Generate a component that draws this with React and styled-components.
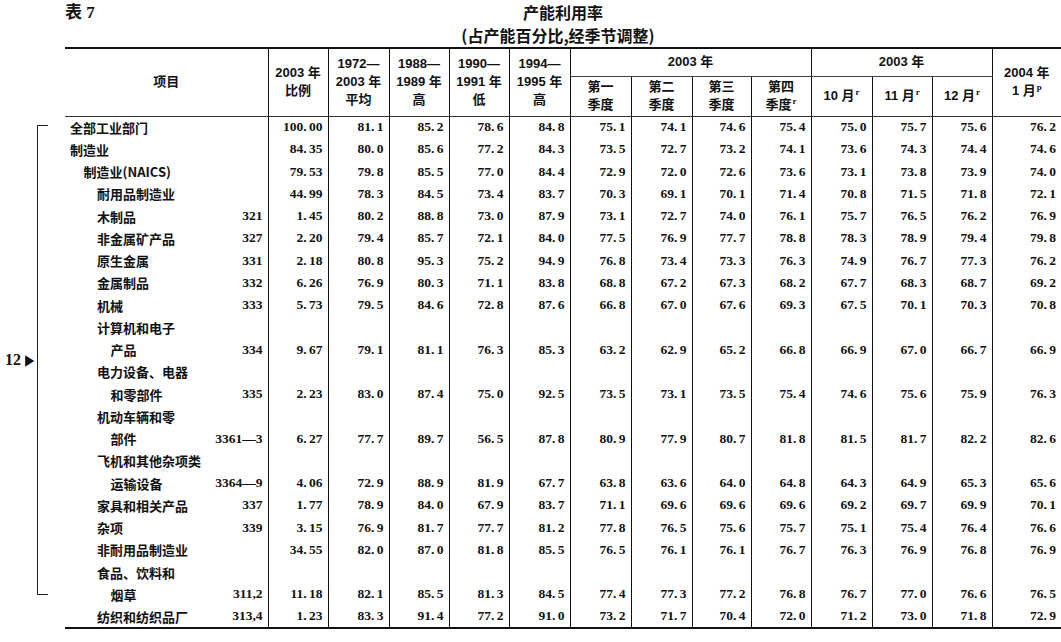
import React from "react"
import styled, { createGlobalStyle } from "styled-components"

const GlobalStyle = createGlobalStyle`
  html, body {
    margin: 0;
    padding: 0;
    background: #fff;
  }
  body {
    font-family: "Liberation Serif", "Noto Sans CJK SC", serif;
    color: #111;
  }
`

const widths = [150, 53, 60, 61, 60, 60, 61, 61, 61, 59, 60, 61, 60, 60, 69]

const rows = [
  ["全部工业部门", 0, "", "100.00", "81.1", "85.2", "78.6", "84.8", "75.1", "74.1", "74.6", "75.4", "75.0", "75.7", "75.6", "76.2"],
  ["制造业", 0, "", "84.35", "80.0", "85.6", "77.2", "84.3", "73.5", "72.7", "73.2", "74.1", "73.6", "74.3", "74.4", "74.6"],
  ["制造业(NAICS)", 1, "", "79.53", "79.8", "85.5", "77.0", "84.4", "72.9", "72.0", "72.6", "73.6", "73.1", "73.8", "73.9", "74.0"],
  ["耐用品制造业", 2, "", "44.99", "78.3", "84.5", "73.4", "83.7", "70.3", "69.1", "70.1", "71.4", "70.8", "71.5", "71.8", "72.1"],
  ["木制品", 2, "321", "1.45", "80.2", "88.8", "73.0", "87.9", "73.1", "72.7", "74.0", "76.1", "75.7", "76.5", "76.2", "76.9"],
  ["非金属矿产品", 2, "327", "2.20", "79.4", "85.7", "72.1", "84.0", "77.5", "76.9", "77.7", "78.8", "78.3", "78.9", "79.4", "79.8"],
  ["原生金属", 2, "331", "2.18", "80.8", "95.3", "75.2", "94.9", "76.8", "73.4", "73.3", "76.3", "74.9", "76.7", "77.3", "76.2"],
  ["金属制品", 2, "332", "6.26", "76.9", "80.3", "71.1", "83.8", "68.8", "67.2", "67.3", "68.2", "67.7", "68.3", "68.7", "69.2"],
  ["机械", 2, "333", "5.73", "79.5", "84.6", "72.8", "87.6", "66.8", "67.0", "67.6", "69.3", "67.5", "70.1", "70.3", "70.8"],
  ["计算机和电子", 2],
  ["产品", 3, "334", "9.67", "79.1", "81.1", "76.3", "85.3", "63.2", "62.9", "65.2", "66.8", "66.9", "67.0", "66.7", "66.9"],
  ["电力设备、电器", 2],
  ["和零部件", 3, "335", "2.23", "83.0", "87.4", "75.0", "92.5", "73.5", "73.1", "73.5", "75.4", "74.6", "75.6", "75.9", "76.3"],
  ["机动车辆和零", 2],
  ["部件", 3, "3361—3", "6.27", "77.7", "89.7", "56.5", "87.8", "80.9", "77.9", "80.7", "81.8", "81.5", "81.7", "82.2", "82.6"],
  ["飞机和其他杂项类", 2],
  ["运输设备", 3, "3364—9", "4.06", "72.9", "88.9", "81.9", "67.7", "63.8", "63.6", "64.0", "64.8", "64.3", "64.9", "65.3", "65.6"],
  ["家具和相关产品", 2, "337", "1.77", "78.9", "84.0", "67.9", "83.7", "71.1", "69.6", "69.6", "69.6", "69.2", "69.7", "69.9", "70.1"],
  ["杂项", 2, "339", "3.15", "76.9", "81.7", "77.7", "81.2", "77.8", "76.5", "75.6", "75.7", "75.1", "75.4", "76.4", "76.6"],
  ["非耐用品制造业", 2, "", "34.55", "82.0", "87.0", "81.8", "85.5", "76.5", "76.1", "76.1", "76.7", "76.3", "76.9", "76.8", "76.9"],
  ["食品、饮料和", 2],
  ["烟草", 3, "311,2", "11.18", "82.1", "85.5", "81.3", "84.5", "77.4", "77.3", "77.2", "76.8", "76.7", "77.0", "76.6", "76.5"],
  ["纺织和纺织品厂", 2, "313,4", "1.23", "83.3", "91.4", "77.2", "91.0", "73.2", "71.7", "70.4", "72.0", "71.2", "73.0", "71.8", "72.9"],
]

const Num = ({ value }) => {
  const [a, b] = value.split(".")
  return (
    <>
      {a}
      <Dot>.</Dot>
      {b}
    </>
  )
}

const App = () => (
  <Page>
    <GlobalStyle />
    <Margin>
      <Bracket />
      <Marker>
        12<Arrow>▶</Arrow>
      </Marker>
    </Margin>
    <Sheet>
      <TitleBar>
        <TableNo>表 7</TableNo>
        <TitleStack>
          <Title>产能利用率</Title>
          <Subtitle>(占产能百分比,经季节调整)</Subtitle>
        </TitleStack>
        <span />
      </TitleBar>
      <Table>
        <colgroup>
          {widths.map((w, i) => (
            <col key={i} style={{ width: w }} />
          ))}
        </colgroup>
        <thead>
          <HeadRow $h={28}>
            <Th colSpan={2} rowSpan={2} $first>
              项目
            </Th>
            <Th rowSpan={2}>
              2003 年<br />比例
            </Th>
            <Th rowSpan={2}>
              1972—<br />2003 年<br />平均
            </Th>
            <Th rowSpan={2}>
              1988—<br />1989 年<br />高
            </Th>
            <Th rowSpan={2}>
              1990—<br />1991 年<br />低
            </Th>
            <Th rowSpan={2}>
              1994—<br />1995 年<br />高
            </Th>
            <Th colSpan={4} $group>
              2003 年
            </Th>
            <Th colSpan={3} $group>
              2003 年
            </Th>
            <Th rowSpan={2} $last>
              2004 年<br />1 月<Sup>p</Sup>
            </Th>
          </HeadRow>
          <HeadRow $h={40}>
            <Th>
              第一<br />季度
            </Th>
            <Th>
              第二<br />季度
            </Th>
            <Th>
              第三<br />季度
            </Th>
            <Th>
              第四<br />季度<Sup>r</Sup>
            </Th>
            <Th>
              10 月<Sup>r</Sup>
            </Th>
            <Th>
              11 月<Sup>r</Sup>
            </Th>
            <Th>
              12 月<Sup>r</Sup>
            </Th>
          </HeadRow>
        </thead>
        <tbody>
          {rows.map(([label, level, code, ...vals], i) => (
            <Row key={i}>
              <Label $level={level}>{label}</Label>
              <Code>{code}</Code>
              {Array.from({ length: 13 }).map((_, j) => (
                <Cell key={j} $last={j === 12}>
                  {vals[j] ? <Num value={vals[j]} /> : null}
                </Cell>
              ))}
            </Row>
          ))}
        </tbody>
      </Table>
    </Sheet>
  </Page>
)

export default App

const Page = styled.div`
  display: flex;
  width: 1061px;
  height: 642px;
  overflow: hidden;
`

const Margin = styled.div`
  position: relative;
  width: 65px;
  flex: none;
`

const Bracket = styled.div`
  position: absolute;
  left: 37px;
  top: 125px;
  width: 10px;
  height: 468px;
  border: 1.5px solid #222;
  border-right: none;
`

const Marker = styled.div`
  position: absolute;
  left: 5px;
  top: 350px;
  display: flex;
  align-items: center;
  gap: 4px;
  font-family: "Liberation Serif", serif;
  font-weight: 700;
  font-size: 16px;
  line-height: 20px;
  color: #111;
  white-space: nowrap;
`

const Arrow = styled.span`
  font-family: "DejaVu Sans", sans-serif;
  font-size: 15px;
  transform: scaleX(0.8);
  transform-origin: left center;
`

const Sheet = styled.div`
  width: 996px;
  flex: none;
`

const TitleBar = styled.div`
  display: grid;
  grid-template-columns: 1fr auto 1fr;
  height: 47px;
  align-items: start;
`

const TableNo = styled.div`
  font-family: "Liberation Serif", "Noto Sans CJK SC", serif;
  font-weight: 700;
  font-size: 17px;
  line-height: 21px;
  padding-top: 2px;
`

const TitleStack = styled.div`
  display: flex;
  flex-direction: column;
  align-items: center;
  gap: 0;
`

const Title = styled.div`
  font-family: "Noto Sans CJK SC", sans-serif;
  font-weight: 700;
  font-size: 16px;
  line-height: 24px;
`

const Subtitle = styled.div`
  font-family: "Noto Sans CJK SC", sans-serif;
  font-weight: 700;
  font-size: 16px;
  line-height: 23px;
  margin-left: -10px;
`

const Table = styled.table`
  width: 996px;
  table-layout: fixed;
  border-collapse: collapse;
  border-top: 2px solid #111;
  border-bottom: 2px solid #111;
  font-family: "Liberation Serif", "Noto Sans CJK SC", serif;
  font-weight: 700;
  font-size: 13.5px;
  color: #111;
`

const HeadRow = styled.tr`
  height: ${p => p.$h}px;
`

const Th = styled.th`
  padding: 0;
  font-family: "Liberation Sans", "Noto Sans CJK SC", sans-serif;
  font-weight: 700;
  font-size: 13px;
  line-height: 18px;
  text-align: center;
  vertical-align: middle;
  border-bottom: 1px solid #333;
  border-left: ${p => (p.$first ? "none" : "1.5px solid #111")};
  border-right: ${p => (p.$last ? "none" : "1.5px solid #111")};
  ${p => p.$group && "border-bottom: 1px solid #444;"}
`

const Sup = styled.sup`
  font-family: "Liberation Serif", serif;
  font-size: 9px;
  font-weight: 700;
  vertical-align: 5px;
  line-height: 0;
  margin-left: 1px;
`

const Row = styled.tr`
  height: 22.26px;
`

const Label = styled.td`
  padding: 0 0 0 ${p => 5 + p.$level * 13.5}px;
  font-family: "Noto Sans CJK SC", sans-serif;
  font-weight: 700;
  font-size: 13px;
  white-space: nowrap;
  overflow: visible;
`

const Code = styled.td`
  padding: 0 5px 0 0;
  text-align: right;
  white-space: nowrap;
  border-right: 1.5px solid #111;
`

const Cell = styled.td`
  padding: 0 5px 0 0;
  text-align: right;
  white-space: nowrap;
  border-right: ${p => (p.$last ? "none" : "1.5px solid #111")};
`

const Dot = styled.span`
  padding-right: 2.5px;
`
